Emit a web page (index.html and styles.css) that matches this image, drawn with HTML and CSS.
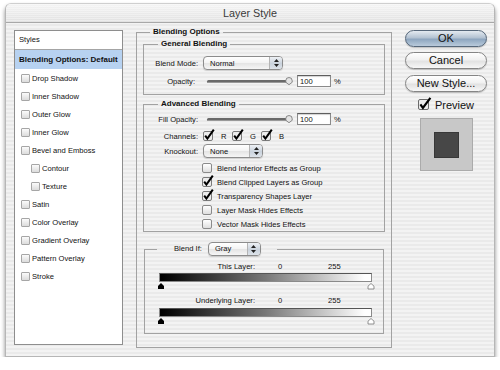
FILE: index.html
```html
<!DOCTYPE html>
<html lang="en">
<head>
    <meta charset="UTF-8">
    <title>Layer Style</title>
    <link rel="stylesheet" href="styles.css">
</head>
<body>

<div class="window">
    <div class="titlebar">Layer Style</div>

    <div class="dialog">
        <!-- effects list -->
        <div class="styles-list">
            <div class="list-head">Styles</div>
            <div class="list-item selected">Blending Options: Default</div>
            <div class="list-item"><span class="lbox"></span>Drop Shadow</div>
            <div class="list-item"><span class="lbox"></span>Inner Shadow</div>
            <div class="list-item"><span class="lbox"></span>Outer Glow</div>
            <div class="list-item"><span class="lbox"></span>Inner Glow</div>
            <div class="list-item"><span class="lbox"></span>Bevel and Emboss</div>
            <div class="list-item sub"><span class="lbox"></span>Contour</div>
            <div class="list-item sub"><span class="lbox"></span>Texture</div>
            <div class="list-item"><span class="lbox"></span>Satin</div>
            <div class="list-item"><span class="lbox"></span>Color Overlay</div>
            <div class="list-item"><span class="lbox"></span>Gradient Overlay</div>
            <div class="list-item"><span class="lbox"></span>Pattern Overlay</div>
            <div class="list-item"><span class="lbox"></span>Stroke</div>
        </div>

        <!-- blending options -->
        <fieldset class="panel">
            <legend>Blending Options</legend>

            <fieldset class="group general">
                <legend>General Blending</legend>
                <div class="row first">
                    <span class="lbl">Blend Mode:</span>
                    <div class="popup w-normal"><span class="val">Normal</span><span class="arrows"><svg width="5" height="8" viewBox="0 0 5 8"><path d="M2.5 0L5 3H0z M0 5H5L2.5 8z" fill="#222"/></svg></span></div>
                </div>
                <div class="row">
                    <span class="lbl short">Opacity:</span>
                    <svg class="slider" width="90" height="10" viewBox="0 0 90 10"><rect x="4" y="4" width="80" height="3" rx="1.5" fill="#6a6a6a"/><rect x="4" y="6" width="80" height="1" fill="#999"/><path d="M86 1.5a3.2 3.2 0 0 1 3.2 3.2v1.6l-3.2 2.4l-3.2-2.4v-1.6a3.2 3.2 0 0 1 3.2-3.2z" fill="#e4e4e4" stroke="#707070" stroke-width=".8"/></svg>
                    <input class="num" type="text" value="100">
                    <span class="pct">%</span>
                </div>
            </fieldset>

            <fieldset class="group advanced">
                <legend>Advanced Blending</legend>
                <div class="row first">
                    <span class="lbl">Fill Opacity:</span>
                    <svg class="slider" width="90" height="10" viewBox="0 0 90 10"><rect x="4" y="4" width="80" height="3" rx="1.5" fill="#6a6a6a"/><rect x="4" y="6" width="80" height="1" fill="#999"/><path d="M86 1.5a3.2 3.2 0 0 1 3.2 3.2v1.6l-3.2 2.4l-3.2-2.4v-1.6a3.2 3.2 0 0 1 3.2-3.2z" fill="#e4e4e4" stroke="#707070" stroke-width=".8"/></svg>
                    <input class="num" type="text" value="100">
                    <span class="pct">%</span>
                </div>
                <div class="row channels">
                    <span class="lbl">Channels:</span>
                    <span class="chan"><svg class="cb-on" width="12" height="12" viewBox="0 0 12 12"><rect x=".5" y="2.5" width="9" height="9" rx="1.5" fill="#ececec" stroke="#7a7a7a"/><path d="M2.2 6.6L4.4 9.6L10.8 .6" stroke="#000" stroke-width="2" fill="none"/></svg>R</span>
                    <span class="chan"><svg class="cb-on" width="12" height="12" viewBox="0 0 12 12"><rect x=".5" y="2.5" width="9" height="9" rx="1.5" fill="#ececec" stroke="#7a7a7a"/><path d="M2.2 6.6L4.4 9.6L10.8 .6" stroke="#000" stroke-width="2" fill="none"/></svg>G</span>
                    <span class="chan"><svg class="cb-on" width="12" height="12" viewBox="0 0 12 12"><rect x=".5" y="2.5" width="9" height="9" rx="1.5" fill="#ececec" stroke="#7a7a7a"/><path d="M2.2 6.6L4.4 9.6L10.8 .6" stroke="#000" stroke-width="2" fill="none"/></svg>B</span>
                </div>
                <div class="row knock">
                    <span class="lbl">Knockout:</span>
                    <div class="popup w-knock"><span class="val">None</span><span class="arrows"><svg width="5" height="8" viewBox="0 0 5 8"><path d="M2.5 0L5 3H0z M0 5H5L2.5 8z" fill="#222"/></svg></span></div>
                </div>
                <div class="opt first-opt"><span class="cb"></span>Blend Interior Effects as Group</div>
                <div class="opt"><svg class="cb-on" width="12" height="12" viewBox="0 0 12 12"><rect x=".5" y="2.5" width="9" height="9" rx="1.5" fill="#ececec" stroke="#7a7a7a"/><path d="M2.2 6.6L4.4 9.6L10.8 .6" stroke="#000" stroke-width="2" fill="none"/></svg>Blend Clipped Layers as Group</div>
                <div class="opt"><svg class="cb-on" width="12" height="12" viewBox="0 0 12 12"><rect x=".5" y="2.5" width="9" height="9" rx="1.5" fill="#ececec" stroke="#7a7a7a"/><path d="M2.2 6.6L4.4 9.6L10.8 .6" stroke="#000" stroke-width="2" fill="none"/></svg>Transparency Shapes Layer</div>
                <div class="opt"><span class="cb"></span>Layer Mask Hides Effects</div>
                <div class="opt"><span class="cb"></span>Vector Mask Hides Effects</div>
            </fieldset>

            <fieldset class="group blendif">
                <legend><span class="legend-inner">Blend If: <span class="popup w-gray"><span class="val">Gray</span><span class="arrows"><svg width="5" height="8" viewBox="0 0 5 8"><path d="M2.5 0L5 3H0z M0 5H5L2.5 8z" fill="#222"/></svg></span></span></span></legend>

                <div class="lrow first"><span class="lname">This Layer:</span><span class="v0">0</span><span>255</span></div>
                <div class="ramp"></div>
                <svg class="thumbs" width="220" height="8" viewBox="0 0 220 8"><path d="M5 1L8 4V7H2V4Z" fill="#000"/><path d="M215 1.5L218 4.2V7H212V4.2Z" fill="#fff" stroke="#777" stroke-width=".8"/></svg>

                <div class="lrow"><span class="lname">Underlying Layer:</span><span class="v0">0</span><span>255</span></div>
                <div class="ramp second"></div>
                <svg class="thumbs" width="220" height="8" viewBox="0 0 220 8"><path d="M5 1L8 4V7H2V4Z" fill="#000"/><path d="M215 1.5L218 4.2V7H212V4.2Z" fill="#fff" stroke="#777" stroke-width=".8"/></svg>
            </fieldset>
        </fieldset>

        <!-- buttons -->
        <div class="side">
            <div class="btn default">OK</div>
            <div class="btn">Cancel</div>
            <div class="btn new">New Style...</div>
            <div class="preview-row"><svg class="cb-big" width="14" height="14" viewBox="0 0 14 14"><rect x=".5" y="2.5" width="10" height="10" rx="1.5" fill="#ececec" stroke="#6a6a6a"/><path d="M2.4 7.4L4.9 10.8L12.4 .8" stroke="#000" stroke-width="2.2" fill="none"/></svg>Preview</div>
            <div class="preview-box"><div class="swatch"></div></div>
        </div>
    </div>
</div>

</body>
</html>
```

FILE: styles.css
```css
* {
    box-sizing: border-box;
}
body {
    margin: 0;
    background: #fff;
    font-family: "Liberation Sans", Arial, sans-serif;
    font-size: 7.6px;
    color: #111;
}
.window {
    width: 490px;
    height: 354px;
    margin: 3px 0 0 5px;
    border: 1px solid #b6b6b6;
    border-top-color: #cfcfcf;
    border-radius: 6px 6px 0 0;
    box-shadow: 0 3px 4px rgba(0, 0, 0, 0.45);
    background: repeating-linear-gradient(#eaeaea 0 2px, #f3f3f3 2px 4px);
}
.titlebar {
    height: 19px;
    line-height: 18px;
    text-align: center;
    font-size: 10.8px;
    color: #3a3a3a;
    border-bottom: 1px solid #a8a8a8;
    border-radius: 5px 5px 0 0;
    background: repeating-linear-gradient(rgba(255,255,255,0.35) 0 1px, rgba(0,0,0,0) 1px 2px),
                linear-gradient(#f4f4f4, #e2e2e2);
}
.dialog {
    display: flex;
    align-items: flex-start;
    height: 333px;
    padding: 7px 7px 0 8px;
}

/* styles list */
.styles-list {
    width: 109px;
    height: 315px;
    flex: none;
    background: #fff;
    border: 1px solid #8e8e8e;
}
.list-head {
    height: 19px;
    line-height: 18px;
    padding-left: 4px;
    border-bottom: 1px solid #a4a4a4;
}
.list-item {
    height: 18px;
    display: flex;
    align-items: center;
    padding-left: 6px;
}
.list-item.selected {
    height: 19px;
    padding-left: 4px;
    background: #b7d2f1;
    font-weight: bold;
    font-size: 8px;
}
.list-item.sub {
    padding-left: 16px;
}
.lbox {
    width: 9px;
    height: 9px;
    margin-right: 2px;
    border: 1px solid #a6a6a6;
    border-radius: 1px;
    background: linear-gradient(#fbfbfb, #dcdcdc);
}

/* group boxes */
fieldset {
    margin: 0;
    padding: 0;
    min-width: 0;
    border: 1px solid #a2a2a2;
}
legend {
    margin-left: 13px;
    padding: 0 3px;
    line-height: 10px;
    font-size: 8px;
    font-weight: bold;
}
.panel {
    width: 256px;
    flex: none;
    margin: -3px 0 0 13px;
    padding-bottom: 13px;
}
.group {
    margin: 0 6px;
}
.group legend {
    margin-left: 14px;
}
.general {
    margin-top: 2px;
    padding-bottom: 6px;
}
.advanced {
    margin-top: 4px;
}
.blendif {
    margin: 10px 7px 0;
    padding-bottom: 8px;
}
.blendif legend {
    margin-left: 12px;
    padding: 0 16px 0 17px;
    font-weight: normal;
    font-size: 7.6px;
    line-height: 14px;
}
.legend-inner {
    display: flex;
    align-items: center;
    gap: 6px;
}

/* rows */
.row {
    display: flex;
    align-items: center;
    height: 14px;
    margin-top: 4px;
}
.row.first {
    margin-top: 7px;
}
.advanced .row.first {
    margin-top: 3px;
}
.row.channels {
    margin-top: 3px;
}
.row.knock {
    margin-top: 1px;
}
.lbl {
    width: 54px;
    flex: none;
    margin-right: 5px;
    text-align: right;
}
.lbl.short {
    padding-right: 3px;
}
.popup {
    height: 14px;
    display: flex;
    align-items: center;
    border: 1px solid #8c8c8c;
    border-radius: 4px;
    background: linear-gradient(#ffffff, #f3f3f3 50%, #e4e4e4 52%, #f6f6f6);
    box-shadow: 0 1px 1px rgba(0, 0, 0, 0.15);
}
.popup .val {
    flex: 1;
    padding-left: 6px;
}
.popup .arrows {
    width: 13px;
    height: 100%;
    display: flex;
    align-items: center;
    justify-content: center;
    border-left: 1px solid #b4b4b4;
    border-radius: 0 3px 3px 0;
    background: linear-gradient(#eef1f5, #c9d2dc 55%, #dde3ea);
}
.w-normal { width: 80px; }
.w-knock { width: 60px; }
.w-gray { width: 53px; }

.slider {
    flex: none;
}
.num {
    width: 34px;
    height: 12px;
    margin: 0 0 0 4px;
    padding: 0 0 0 2px;
    border: 1px solid #8a8a8a;
    border-top-color: #5e5e5e;
    background: #fff;
    box-shadow: inset 0 1px 1px rgba(0, 0, 0, 0.18);
    font: 7.6px "Liberation Sans", Arial, sans-serif;
    color: #111;
}
.pct {
    margin-left: 3px;
}
.chan {
    width: 29px;
    display: flex;
    align-items: center;
}
.cb-on {
    flex: none;
    margin-top: -2px;
    margin-right: 5px;
}
.chan .cb-on {
    margin-right: 6px;
}

/* check options */
.opt {
    height: 14px;
    display: flex;
    align-items: center;
    padding-left: 58px;
}
.opt.first-opt {
    margin-top: 3px;
}
.opt .cb-on {
    margin-right: 3px;
}
.cb {
    width: 10px;
    height: 10px;
    flex: none;
    margin-right: 5px;
    border: 1px solid #8a8a8a;
    border-radius: 2px;
    background: linear-gradient(#ffffff, #dedede);
}

/* blend if */
.lrow {
    height: 10px;
    margin-top: 5px;
    display: flex;
    align-items: center;
}
.lname {
    width: 110px;
    text-align: right;
}
.v0 {
    width: 50px;
    margin-left: 23px;
}
.ramp {
    width: 213px;
    height: 9px;
    margin: 2px 0 0 14px;
    border: 1px solid #8a8a8a;
    border-top-color: #555;
    background: linear-gradient(to right, #000 1%, #777 50%, #fff 97%);
}
.ramp.second {
    margin-top: 3px;
}
.thumbs {
    display: block;
    margin-left: 11px;
}

/* right column */
.side {
    width: 82px;
    flex: none;
    margin-left: 13px;
    display: flex;
    flex-direction: column;
    align-items: center;
}
.btn {
    width: 82px;
    height: 17px;
    line-height: 15px;
    margin-top: 5px;
    text-align: center;
    font-size: 11px;
    color: #111;
    border: 1px solid #858585;
    border-radius: 9px;
    background: linear-gradient(#ffffff, #f1f1f1 45%, #e2e2e2 55%, #f7f7f7);
    box-shadow: 0 1px 1px rgba(0, 0, 0, 0.2);
}
.btn.default {
    margin-top: 0;
    border-color: #56677a;
    background: linear-gradient(#e4eaf0, #b3c2d2 45%, #8ea6bf 55%, #b9cadb);
}
.btn.new {
    margin-top: 6px;
}
.preview-row {
    margin-top: 6px;
    height: 13px;
    display: flex;
    align-items: center;
    font-size: 11px;
}
.cb-big {
    margin-right: 3px;
    margin-top: -2px;
}
.preview-box {
    width: 53px;
    height: 53px;
    margin-top: 7px;
    display: flex;
    align-items: center;
    justify-content: center;
    border: 1px solid #ababab;
    background: #c8c8c8;
}
.swatch {
    width: 25px;
    height: 26px;
    background: #474747;
    border: 1px solid #383838;
}
```
